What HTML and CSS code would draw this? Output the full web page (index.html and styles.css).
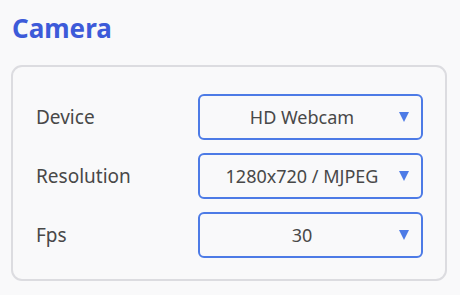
FILE: index.html
```html
<!DOCTYPE html>
<html lang="en">
<head>
    <meta charset="UTF-8">
    <title>Camera</title>
    <link rel="stylesheet" href="styles.css">
</head>
<body>
    <h2 class="title">Camera</h2>
    <section class="card">
        <div class="row">
            <span class="label">Device</span>
            <div class="select">
                <span class="value">HD Webcam</span>
                <span class="arrow"></span>
            </div>
        </div>
        <div class="row">
            <span class="label">Resolution</span>
            <div class="select">
                <span class="value">1280x720 / MJPEG</span>
                <span class="arrow"></span>
            </div>
        </div>
        <div class="row">
            <span class="label">Fps</span>
            <div class="select">
                <span class="value">30</span>
                <span class="arrow"></span>
            </div>
        </div>
    </section>
</body>
</html>
```
FILE: styles.css
```css
body {
    margin: 0;
    padding: 0;
    background-color: #f9f9fa;
    font-family: 'Noto Sans', 'Open Sans', sans-serif;
    color: #484848;
}

.title {
    margin: 0;
    padding: 11px 12px 0;
    height: 65px;
    box-sizing: border-box;
    font-size: 26px;
    font-weight: bold;
    line-height: 34px;
    color: #3d5bd9;
}

.card {
    margin: 0 13px 0 11px;
    padding: 27px 22px 21px 23px;
    border: 2px solid #dcdce0;
    border-radius: 11px;
    display: flex;
    flex-direction: column;
    gap: 13px;
}

.row {
    display: grid;
    grid-template-columns: 1fr 225px;
    align-items: center;
}

.label {
    font-size: 19px;
    color: #484848;
}

.select {
    height: 46px;
    box-sizing: border-box;
    border: 2px solid #4d7be6;
    border-radius: 6px;
    display: flex;
    align-items: center;
    padding: 0 12px;
}

.value {
    flex: 1;
    text-align: center;
    font-size: 18px;
    color: #484848;
}

.arrow {
    margin-left: 7px;
    width: 0;
    height: 0;
    border-left: 5.5px solid transparent;
    border-right: 5.5px solid transparent;
    border-top: 10px solid #4d7be6;
}
```
